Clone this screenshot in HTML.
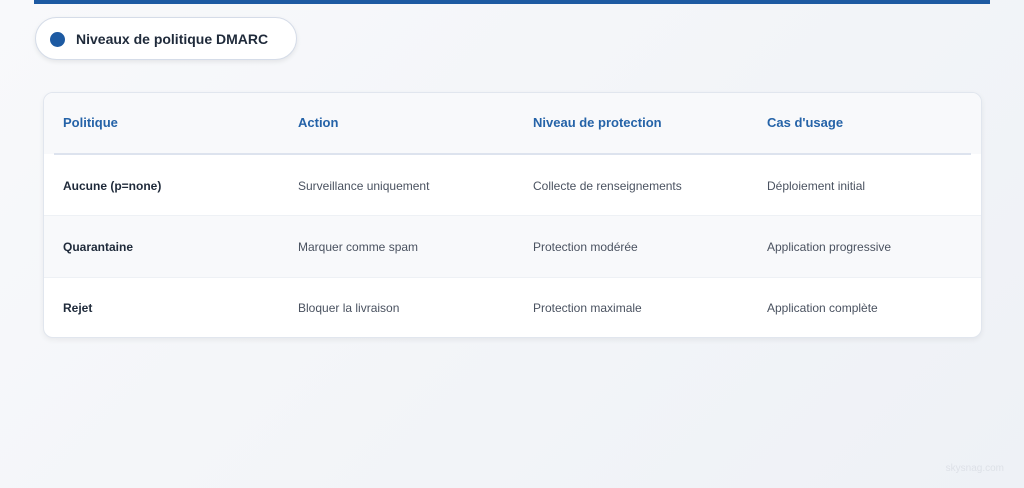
<!DOCTYPE html>
<html><head><style>
body{margin:0;width:1024px;height:488px;overflow:hidden;background:linear-gradient(135deg,#f8f9fb,#eef1f6);font-family:"Liberation Sans",sans-serif;position:relative}
.bar{position:absolute;left:34px;top:0;width:956px;height:4px;background:#1d5aa2}
.pill{position:absolute;left:35px;top:17px;width:262px;height:43px;box-sizing:border-box;background:#fff;border:1px solid #d5dce8;border-radius:22px;box-shadow:0 2px 5px rgba(0,0,0,.08)}
.dot{position:absolute;left:14px;top:14px;width:15px;height:15px;border-radius:50%;background:#1d5aa2}
.pill span{position:absolute;left:40px;top:13px;font-size:14px;font-weight:bold;color:#1f2a3a}
.card{position:absolute;left:43px;top:92px;width:939px;height:246px;box-sizing:border-box;background:#fff;border:1px solid #e1e6ee;border-radius:10px;box-shadow:0 2px 6px rgba(0,0,0,.06);overflow:hidden}
.hd{position:absolute;left:0;top:0;width:100%;height:61px;background:#f8f9fb}
.hl{position:absolute;left:10px;right:10px;top:60px;height:2px;background:#dde3ee}
.t{position:absolute;font-size:12px;color:#4a5260}
.h{font-size:13px;font-weight:bold;color:#2563a8}
.b{font-weight:bold;color:#1f2a3a}
.r2{position:absolute;left:0;width:100%;top:122px;height:61px;background:#f8f9fb;border-top:1px solid #eef1f5;border-bottom:1px solid #eef1f5}
.wm{position:absolute;right:20px;top:463px;font-size:10px;color:#dde1e7}
</style></head><body>
<div class="bar"></div>
<div class="pill"><div class="dot"></div><span>Niveaux de politique DMARC</span></div>
<div class="card">
<div class="hd"></div><div class="hl"></div><div class="r2"></div>
<div class="t h" style="left:19px;top:22px">Politique</div>
<div class="t h" style="left:254px;top:22px">Action</div>
<div class="t h" style="left:489px;top:22px">Niveau de protection</div>
<div class="t h" style="left:723px;top:22px">Cas d'usage</div>
<div class="t b" style="left:19px;top:86px">Aucune (p=none)</div>
<div class="t" style="left:254px;top:86px">Surveillance uniquement</div>
<div class="t" style="left:489px;top:86px">Collecte de renseignements</div>
<div class="t" style="left:723px;top:86px">Déploiement initial</div>
<div class="t b" style="left:19px;top:147px">Quarantaine</div>
<div class="t" style="left:254px;top:147px">Marquer comme spam</div>
<div class="t" style="left:489px;top:147px">Protection modérée</div>
<div class="t" style="left:723px;top:147px">Application progressive</div>
<div class="t b" style="left:19px;top:208px">Rejet</div>
<div class="t" style="left:254px;top:208px">Bloquer la livraison</div>
<div class="t" style="left:489px;top:208px">Protection maximale</div>
<div class="t" style="left:723px;top:208px">Application complète</div>
</div>
<div class="wm">skysnag.com</div>
</body></html>
